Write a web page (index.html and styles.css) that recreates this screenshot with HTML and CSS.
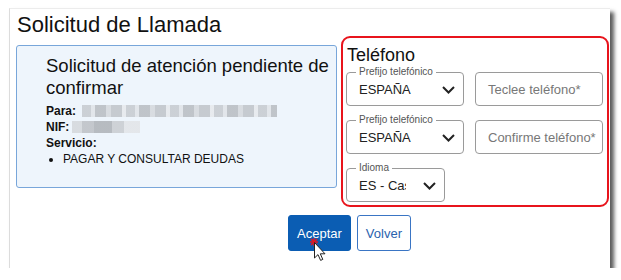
FILE: index.html
```html
<!DOCTYPE html>
<html lang="es">
<head>
<meta charset="utf-8">
<title>Solicitud de Llamada</title>
<link rel="stylesheet" href="styles.css">
</head>
<body>
<div class="window">
  <h1 class="title">Solicitud de Llamada</h1>
  <div class="content">
    <section class="info">
      <h2 class="info-title">Solicitud de atención pendiente de confirmar</h2>
      <div class="line"><b>Para:</b><span class="blur blur-long"></span></div>
      <div class="line"><b>NIF:</b><span class="blur blur-short"></span></div>
      <div class="line"><b>Servicio:</b></div>
      <ul class="list"><li>PAGAR Y CONSULTAR DEUDAS</li></ul>
    </section>
    <section class="phone">
      <h2 class="phone-title">Teléfono</h2>
      <div class="grid">
        <div class="field select">
          <span class="legend">Prefijo telefónico</span>
          <span class="value">ESPAÑA</span>
          <svg class="chev" width="13" height="8" viewBox="0 0 13 8"><polyline points="1,1 6.5,6.5 12,1" fill="none" stroke="#222" stroke-width="2"/></svg>
        </div>
        <div class="field input"><span class="ph">Teclee teléfono*</span></div>
        <div class="field select">
          <span class="legend">Prefijo telefónico</span>
          <span class="value">ESPAÑA</span>
          <svg class="chev" width="13" height="8" viewBox="0 0 13 8"><polyline points="1,1 6.5,6.5 12,1" fill="none" stroke="#222" stroke-width="2"/></svg>
        </div>
        <div class="field input"><span class="ph">Confirme teléfono*</span></div>
        <div class="field select small">
          <span class="legend">Idioma</span>
          <span class="value clip">ES - Castellano</span>
          <svg class="chev" width="13" height="8" viewBox="0 0 13 8"><polyline points="1,1 6.5,6.5 12,1" fill="none" stroke="#222" stroke-width="2"/></svg>
        </div>
      </div>
    </section>
  </div>
  <div class="actions">
    <button class="btn primary">Aceptar</button>
    <button class="btn secondary">Volver</button>
  </div>
  <svg class="cursor" width="22" height="26" viewBox="0 0 22 26">
    <g stroke="#e8141c" stroke-width="1.4">
      <line x1="1" y1="5" x2="9" y2="5"/>
      <line x1="5" y1="1" x2="5" y2="9"/>
      <line x1="2" y1="2" x2="8" y2="8"/>
      <line x1="8" y1="2" x2="2" y2="8"/>
    </g>
    <path d="M5.5 5.5 L5.5 21 L9 17.6 L11.6 23.4 L13.8 22.4 L11.3 16.8 L16 16.8 Z" fill="#fff" stroke="#222" stroke-width="1" stroke-linejoin="round"/>
  </svg>
</div>
</body>
</html>
```

FILE: styles.css
```css
* { box-sizing: border-box; }

body {
  margin: 0;
  background: #fff;
  font-family: "Liberation Sans", Arial, sans-serif;
  color: #111;
}

.window {
  position: relative;
  margin: 8px 0 0 9px;
  width: 601px;
  height: 260px;
  background: #fff;
  border-left: 1px solid #dcdcdc;
  border-top: 1px solid #ececec;
  box-shadow: 4px 4px 4px rgba(0, 0, 0, 0.65);
  padding: 0 0 0 6px;
}

.title {
  margin: 0;
  padding: 4px 0 0 1px;
  font-size: 22px;
  line-height: 23px;
  font-weight: normal;
  color: #111;
}

.content {
  display: flex;
  align-items: flex-start;
  gap: 4px;
}

.info {
  margin-top: 9px;
  width: 321px;
  height: 143px;
  border: 1px solid #78a6da;
  border-radius: 3px;
  background: #eef5fc;
  padding: 9px 2px 0 29px;
}

.info-title {
  margin: 0 0 4px;
  font-size: 18.5px;
  line-height: 22px;
  font-weight: normal;
  color: #111;
}

.line {
  font-size: 12px;
  line-height: 16px;
  display: flex;
  align-items: center;
}

.blur {
  display: inline-block;
  height: 12px;
  opacity: 0.8;
}

.blur-long {
  margin-left: 6px;
  width: 195px;
  background:
    repeating-linear-gradient(90deg, #c3c7cc 0 9px, #dfe2e6 9px 13px, #b4b8bd 13px 24px, #d3d6da 24px 29px, #bcc0c5 29px 40px, #e6e8eb 40px 44px);
}

.blur-short {
  margin-left: 3px;
  width: 68px;
  background:
    repeating-linear-gradient(90deg, #d2d5d9 0 10px, #b9bcc1 10px 22px, #a9adb2 22px 40px, #c6c9cd 40px 52px, #e1e3e6 52px 68px);
}

.list {
  margin: 0;
  padding-left: 17px;
  font-size: 12px;
  line-height: 16px;
}

.phone {
  width: 268px;
  height: 171px;
  border: 2px solid #e8141c;
  border-radius: 9px;
  padding: 7px 3px 3px 3px;
}

.phone-title {
  margin: 0 0 7px 1px;
  font-size: 18px;
  line-height: 20px;
  font-weight: normal;
  color: #111;
}

.grid {
  display: grid;
  grid-template-columns: 118px 128px;
  grid-auto-rows: 34px;
  column-gap: 11px;
  row-gap: 14px;
}

.field {
  position: relative;
  border: 1px solid #9a9a9a;
  border-radius: 4px;
  display: flex;
  align-items: center;
  padding: 1px 8px 0 12px;
  font-size: 13px;
  background: #fff;
}

.field.small { width: 99px; }

.legend {
  position: absolute;
  left: 9px;
  top: -7px;
  padding: 0 3px 0 3px;
  background: #fff;
  font-size: 10px;
  line-height: 11px;
  color: #555;
}

.value {
  flex: 1;
  color: #222;
  white-space: nowrap;
  overflow: hidden;
}

.value.clip { flex: none; width: 47px; }

.chev { margin-left: auto; }

.ph {
  color: #777;
  white-space: nowrap;
}

.actions {
  display: flex;
  justify-content: center;
  gap: 6px;
  padding-left: 73px;
  margin-top: 8px;
}

.btn {
  height: 36px;
  padding: 0 8px;
  border-radius: 3px;
  font-family: "Liberation Sans", Arial, sans-serif;
  font-size: 13px;
  cursor: pointer;
}

.primary {
  background: #0b5db3;
  border: 1px solid #0b5db3;
  color: #fff;
}

.secondary {
  background: #fff;
  border: 1px solid #3a75c4;
  color: #2a62ad;
}

.cursor {
  position: absolute;
  left: 299px;
  top: 228px;
}
```
